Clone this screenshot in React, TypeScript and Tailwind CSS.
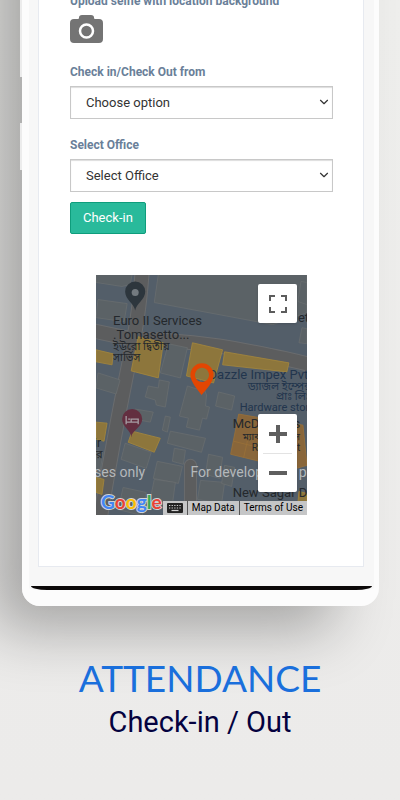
import React from 'react';
import { ChevronDown } from 'lucide-react';

type Shape = { points: string };

const buildings: Shape[] = [
  { points: '62,0 58,28 176,50 210,38 210,0' },
  { points: '2,25 31,29 28,47 0,43' },
  { points: '0,0 36,0 34,10 26,12 0,8' },
  { points: '72,69 91,73 84,103 64,98' },
  { points: '2,98 24,105 20,119 0,113' },
  { points: '52,111 62,113 63,105 73,107 69,132 60,130 59,125 49,122' },
  { points: '91,111 100,114 104,105 110,120 109,131 113,132 110,144 106,143 103,155 90,152 92,143 83,141' },
  { points: '122,117 138,121 135,135 119,131' },
  { points: '39,134 57,137 54,147 38,144' },
  { points: '69,141 74,142 71,157 66,155' },
  { points: '74,156 109,163 105,177 71,168' },
  { points: '29,168 55,177 50,193 25,184' },
  { points: '78,173 89,175 87,189 76,186' },
  { points: '61,186 86,191 82,208 57,203' },
  { points: '58,204 79,207 76,229 54,224' },
  { points: '27,212 50,217 46,240 22,234' },
  { points: '112,179 126,182 123,203 109,199' },
  { points: '104,205 128,207 125,228 101,224' },
  { points: '128,190 138,192 135,211 125,208' },
  { points: '0,175 7,177 4,197 0,196' },
  { points: '204,7 210,8 210,30 201,27' },
  { points: '205,53 210,54 210,69 202,68' },
];

const shops: Shape[] = [
  { points: '0,75 17,79 16,90 0,87' },
  { points: '42,62 67,68 62,103 35,96' },
  { points: '96,68 126,75 117,108 90,101' },
  { points: '128,77 192,88 190,97 126,90' },
  { points: '0,147 11,148 8,166 0,164' },
  { points: '36,156 64,163 58,177 32,167' },
  { points: '0,202 8,204 6,219 0,217' },
  { points: '202,216 210,218 210,240 200,237' },
];

const letters = [
  { char: 'G', color: 'text-[#4285f4]' },
  { char: 'o', color: 'text-[#ea4335]' },
  { char: 'o', color: 'text-[#fbbc05]' },
  { char: 'g', color: 'text-[#4285f4]' },
  { char: 'l', color: 'text-[#34a853]' },
  { char: 'e', color: 'text-[#ea4335]' },
];

function MapTiles() {
  return (
    <svg
      viewBox="0 0 210 240"
      preserveAspectRatio="xMidYMid slice"
      className="absolute inset-0 h-full w-full font-['Roboto','Noto_Sans_Bengali',sans-serif]"
      aria-label="Map"
    >
      <rect width="210" height="240" fill="#535e69" />

      {/* roads */}
      <g fill="none" stroke="#6a6c6e">
        <path d="M46 -4 C43 40 38 62 32 92 S18 160 4 244" strokeWidth="15" />
        <path d="M-4 56 L34 64 Q100 66 150 76 T214 90" strokeWidth="15" />
        <path d="M94 244 V190" strokeWidth="13" strokeLinecap="round" />
      </g>
      <g fill="none" stroke="#5c5d5e">
        <path d="M46 -4 C43 40 38 62 32 92 S18 160 4 244" strokeWidth="13" />
        <path d="M-4 56 L34 64 Q100 66 150 76 T214 90" strokeWidth="13" />
        <path d="M94 244 V190" strokeWidth="11" strokeLinecap="round" />
      </g>

      <g fill="#5b6266" stroke="#6b6f70" strokeWidth="0.7">
        {buildings.map(b => <polygon key={b.points} points={b.points} />)}
      </g>
      <g fill="#8d763c" stroke="#a5873c" strokeWidth="0.8">
        {shops.map(s => <polygon key={s.points} points={s.points} />)}
      </g>
      <g fill="#89663a" stroke="#9a7038" strokeWidth="0.8">
        <polygon points="142,139 206,150 210,190 196,194 134,179" />
        <path d="M152 160 L147 182 M137 166 L165 173" fill="none" />
      </g>

      <g fill="#24282c" fontSize="13">
        <text x="17" y="50">Euro II Services</text>
        <text x="17" y="64">.Tomasetto...</text>
        <text x="17" y="75" fontSize="11">ইউরো দ্বিতীয়</text>
        <text x="17" y="86" fontSize="11">সার্ভিস</text>
        <text x="201" y="47">et</text>
        <text x="136" y="153">McDonald's</text>
        <text x="146" y="165" fontSize="10">ম্যাকডোনাল্ডস</text>
        <text x="155" y="176" fontSize="10">Restaurant</text>
        <text x="136" y="222">New Sagar D</text>
        <text x="-2" y="172" fontSize="12">ir</text>
        <text x="0" y="183" fontSize="11">র</text>
      </g>
      <g fill="#22354d" fontSize="11">
        <text x="112" y="104" fontSize="13">Dazzle Impex Pvt</text>
        <text x="151" y="115">ড্যাজল ইম্পেক্স</text>
        <text x="179" y="125">প্রাঃ লিঃ</text>
        <text x="143" y="136">Hardware store</text>
      </g>
      <g fill="#b4b8bb" fontSize="14">
        <text x="-2" y="202">ses only</text>
        <text x="94" y="202">For development p</text>
      </g>

      {/* place pins */}
      <path d="M39 36 C38 29 29 25 29 17 a10 10 0 0 1 20 0 C49 25 40 29 39 36Z" fill="#2d363d" />
      <circle cx="39" cy="18" r="3.5" fill="#737a7f" />
      <path d="M35 162 C35 155 26 152 26 144 a10 10 0 0 1 20 0 C46 152 36 155 35 162Z" fill="#632f40" />
      <path d="M30 141 V149 M30 147 H42 M42 149 V144 H35 V147 M32 144 H34" fill="none" stroke="#a69da3" strokeWidth="1.3" />
      <path
        fillRule="evenodd"
        d="M105 120 C101 114 94 107 94 100 a11.500 11.500 0 0 1 23 0 C117 107 110 114 105 120Z M105.500 93 a7 7 0 1 0 0.010 0Z"
        fill="#e24602"
      />
    </svg>
  );
}

function MapFooter() {
  return (
    <div className="absolute inset-x-0 bottom-0 flex items-end">
      <div className="flex pl-[5px] text-[19px] leading-[26px] font-bold font-['Lato',sans-serif]">
        {letters.map((l, i) => (
          <span key={i} className={`${l.color} [-webkit-text-stroke:2px_#d0d3d5] [paint-order:stroke]`}>
            {l.char}
          </span>
        ))}
      </div>
      <div className="ml-auto flex h-[14px] items-center bg-[#c5c6c7] text-[10px] whitespace-nowrap text-black">
        <button aria-label="Keyboard shortcuts" className="px-1">
          <svg viewBox="0 0 16 10" className="h-[10px] w-4">
            <rect width="16" height="10" rx="1" fill="#222" />
            <path d="M2 2.500H14M2 5H14" stroke="#d0d0d0" strokeWidth="1.2" strokeDasharray="1.3 1.300" />
            <path d="M4.500 7.500H11.500" stroke="#d0d0d0" strokeWidth="1.2" />
          </svg>
        </button>
        <button className="border-l border-[#555] px-1 leading-[14px]">Map Data</button>
        <a href="#terms" className="border-l border-[#555] px-1 leading-[14px]">Terms of Use</a>
      </div>
    </div>
  );
}

function MapPanel() {
  return (
    <div className="relative mx-auto flex h-60 w-[211px] flex-col overflow-hidden">
      <MapTiles />
      <button
        aria-label="Toggle fullscreen"
        className="relative mt-[9px] mr-[10px] flex size-[39px] items-center justify-center self-end rounded-xs bg-white shadow-sm"
      >
        <svg viewBox="0 0 18 18" className="size-[18px]" fill="none" stroke="#5c5c5c" strokeWidth="2">
          <path d="M1 6V1H6M12 1H17V6M17 12V17H12M6 17H1V12" />
        </svg>
      </button>
      <div className="relative mt-[91px] mr-[10px] flex w-[39px] flex-col self-end rounded-xs bg-white shadow-sm">
        <button aria-label="Zoom in" className="flex h-[39px] items-center justify-center">
          <svg viewBox="0 0 18 18" className="size-[18px]" stroke="#5f5f5f" strokeWidth="4">
            <path d="M0 9H18M9 0V18" />
          </svg>
        </button>
        <div className="mx-[5px] h-px bg-[#e3e3e3]" />
        <button aria-label="Zoom out" className="flex h-[38px] items-center justify-center">
          <svg viewBox="0 0 18 18" className="size-[18px]" stroke="#5f5f5f" strokeWidth="4">
            <path d="M0 9H18" />
          </svg>
        </button>
      </div>
      <MapFooter />
    </div>
  );
}

function SelectField({ id, label, option }: { id: string; label: string; option: string }) {
  return (
    <div>
      <label htmlFor={id} className="mb-[6px] block text-xs leading-4 font-bold text-[#6a7f99]">
        {label}
      </label>
      <div className="relative">
        <select
          id={id}
          className="block h-[33px] w-full appearance-none border border-[#c8c8c8] bg-white pl-[15px] text-[13px] text-[#333] shadow-[inset_0_1px_1px_#ddd]"
        >
          <option>{option}</option>
        </select>
        <ChevronDown
          className="pointer-events-none absolute top-[9px] right-[2px] size-[14px] text-[#333]"
          strokeWidth={2}
        />
      </div>
    </div>
  );
}

export default function App() {
  return (
    <main className="isolate min-h-screen overflow-hidden bg-linear-to-b from-[#eeeeec] to-[#ecebea] font-['Roboto',sans-serif]">
      <div className="relative mr-[21px] ml-[22px] rounded-b-[18px] border-r-[5px] border-b-[16px] border-l-[7px] border-[#fcfcfc] bg-[#f7f7f7]">
        {/* shadow starts above the page so that it stays even along the sides */}
        <div className="absolute -top-40 -right-[5px] -bottom-4 -left-[7px] -z-10 rounded-[18px] shadow-[-38px_32px_60px_-8px_rgba(0,0,0,0.3)]" />
        {/* side buttons of the phone */}
        <div className="absolute top-0 -left-[9px] h-[77px] w-[2px] bg-[#ececec]" />
        <div className="absolute top-[123px] -left-[9px] h-[47px] w-[2px] bg-[#ececec]" />

        <form
          className="mr-[10px] ml-[9px] flow-root border border-t-0 border-[#e7eaf0] bg-white pr-[30px] pb-[51px] pl-[31px]"
          onSubmit={e => e.preventDefault()}
        >
          <label htmlFor="selfie" className="-mt-[7px] block text-xs leading-4 font-bold text-[#6a7f99]">
            Upload selfie with location background
          </label>
          <button id="selfie" type="button" className="mt-[5px] mb-5 block" aria-label="Take a selfie">
            <svg viewBox="0 0 33 30" className="h-[30px] w-[33px]">
              <path
                d="M4 5 H8 Q9 5 9 3.500 Q9 1 12 1 H21 Q24 1 24 3.500 Q24 5 25 5 H29 Q33 5 33 9 V25 Q33 29 29 29 H4 Q0 29 0 25 V9 Q0 5 4 5Z"
                fill="#747474"
              />
              <circle cx="16.500" cy="17" r="6.500" fill="none" stroke="#fff" strokeWidth="2.500" />
            </svg>
          </button>

          <div className="space-y-[18px]">
            <SelectField id="checkType" label="Check in/Check Out from" option="Choose option" />
            <SelectField id="office" label="Select Office" option="Select Office" />
          </div>
          <button
            type="submit"
            className="mt-[10px] mb-[41px] block h-8 rounded-[2px] border border-[#0f9d7c] bg-[#29ba9b] px-3 text-[13px] text-white"
          >
            Check-in
          </button>
          <MapPanel />
        </form>
        <div className="mx-[2px] mt-[19px] h-1 bg-[#0b0808] [border-radius:0_0_16px_16px/0_0_4px_4px]" />
      </div>

      <div className="relative pt-[50px] text-center">
        <h1 className="text-[37px] leading-[44px] text-[#1a6fdc] font-['Lato',sans-serif]">ATTENDANCE</h1>
        <p className="text-[29px] leading-[44px] text-[#04023f]">Check-in / Out</p>
      </div>
    </main>
  );
}
